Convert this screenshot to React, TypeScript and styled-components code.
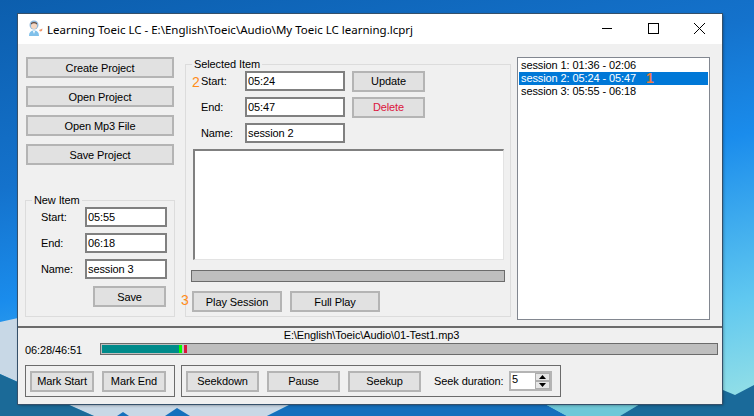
import styled, { createGlobalStyle } from "styled-components";

const GlobalStyle = createGlobalStyle`
  html, body {
    margin: 0;
    padding: 0;
    height: 100%;
    overflow: hidden;
  }
  * {
    box-sizing: border-box;
  }
`;

const sessions = [
  "session 1: 01:36 - 02:06",
  "session 2: 05:24 - 05:47",
  "session 3: 05:55 - 06:18",
];

const App = () => (
  <>
    <GlobalStyle />
    <Desktop>
      <Wallpaper viewBox="0 0 754 416">
        <defs>
          <linearGradient id="sky" gradientUnits="userSpaceOnUse" x1="0" y1="0" x2="122" y2="542">
            <stop offset="0" stopColor="#0c5ead" />
            <stop offset="0.33" stopColor="#1472cc" />
            <stop offset="0.53" stopColor="#1a8cec" />
            <stop offset="0.82" stopColor="#60c8f0" />
            <stop offset="1" stopColor="#95e0e6" />
          </linearGradient>
        </defs>
        <rect width="754" height="416" fill="url(#sky)" />
        <path d="M0 322L18 318H300V404H291L267 416H94L67 404L0 374Z" fill="#c8d8e6" />
        <path d="M0 374L67 404L94 416H0Z" fill="#1b6a98" />
        <path d="M117 416L123 412L129 416ZM165 416L177 408L190 416Z" fill="#1570bd" />
        <path d="M291 404H545L567 416H267Z" fill="#1570bd" />
        <path d="M545 404H640L620 416H567Z" fill="#6fc8d8" />
        <path d="M640 404L723 390L735 395L754 385V416H620Z" fill="#1a6a9a" />
      </Wallpaper>
      <Window>
        <TitleBar>
          <AppIcon viewBox="0 0 18 18">
            <circle cx="8" cy="5" r="4.5" fill="#8fb8dc" />
            <circle cx="8" cy="6" r="3" fill="#f6d6c0" />
            <path d="M5 4.5 Q8 2 11 4.5 L11 3 Q8 1 5 3 Z" fill="#6a4a3a" />
            <path d="M3 16 Q3 10.5 8 10.5 Q13 10.5 13 16 Z" fill="#7fc0ea" />
            <path d="M7 11 L8 14 L9 11 Z" fill="#ffffff" />
            <path d="M13 10 L16.5 8.5 L16 11 L14 11.5 Z" fill="#ef9a70" />
          </AppIcon>
          <WindowTitle>Learning Toeic LC - E:\English\Toeic\Audio\My Toeic LC learning.lcprj</WindowTitle>
          <WindowControls>
            <ControlIcon viewBox="0 0 46 30">
              <path d="M18 14.5H28" stroke="#000" fill="none" />
            </ControlIcon>
            <ControlIcon viewBox="0 0 46 30">
              <rect x="18.5" y="9.5" width="10" height="10" stroke="#000" fill="none" />
            </ControlIcon>
            <ControlIcon viewBox="0 0 46 30">
              <path d="M18 9L29 20M29 9L18 20" stroke="#000" fill="none" />
            </ControlIcon>
          </WindowControls>
        </TitleBar>

        <Content>
          <LeftColumn>
            <ProjectButtons>
              <ProjectButton>Create Project</ProjectButton>
              <ProjectButton>Open Project</ProjectButton>
              <ProjectButton>Open Mp3 File</ProjectButton>
              <ProjectButton>Save Project</ProjectButton>
            </ProjectButtons>
            <NewItemGroup>
              <GroupLegend $offset={-9}>New Item</GroupLegend>
              <FieldRow>
                <NewItemLabel>Start:</NewItemLabel>
                <NewItemInput defaultValue="05:55" />
              </FieldRow>
              <FieldRow>
                <NewItemLabel>End:</NewItemLabel>
                <NewItemInput defaultValue="06:18" />
              </FieldRow>
              <FieldRow>
                <NewItemLabel>Name:</NewItemLabel>
                <NewItemInput defaultValue="session 3" />
              </FieldRow>
              <SaveButton>Save</SaveButton>
            </NewItemGroup>
          </LeftColumn>

          <SelectedGroup>
            <GroupLegend $offset={1}>Selected Item</GroupLegend>
            <SelectedRow>
              <Marker $left={1} $top={3}>2</Marker>
              <SelectedLabel>Start:</SelectedLabel>
              <SelectedInput defaultValue="05:24" />
              <ActionButton>Update</ActionButton>
            </SelectedRow>
            <SelectedRow>
              <SelectedLabel>End:</SelectedLabel>
              <SelectedInput defaultValue="05:47" />
              <ActionButton $danger>Delete</ActionButton>
            </SelectedRow>
            <SelectedRow>
              <SelectedLabel>Name:</SelectedLabel>
              <SelectedInput defaultValue="session 2" />
            </SelectedRow>
            <NotesArea />
            <SessionBar />
            <PlayRow>
              <Marker $left={-11} $top={1}>3</Marker>
              <PlayButton>Play Session</PlayButton>
              <PlayButton>Full Play</PlayButton>
            </PlayRow>
          </SelectedGroup>

          <SessionList>
            {sessions.map((session, index) => (
              <SessionItem key={session} $selected={index === 1}>
                {session}
                {index === 1 && <ListMarker>1</ListMarker>}
              </SessionItem>
            ))}
          </SessionList>
        </Content>

        <PlayerPanel>
          <FileName>E:\English\Toeic\Audio\01-Test1.mp3</FileName>
          <ProgressRow>
            <TimeText>06:28/46:51</TimeText>
            <MainBar>
              <BarFill />
              <BarTick $color="#00ff00" $gap={0} />
              <BarTick $color="#dc143c" $gap={2} />
            </MainBar>
          </ProgressRow>
          <ControlsRow>
            <MarkBox>
              <MarkButton>Mark Start</MarkButton>
              <MarkButton>Mark End</MarkButton>
            </MarkBox>
            <SeekBox>
              <SeekButton>Seekdown</SeekButton>
              <SeekButton>Pause</SeekButton>
              <SeekButton>Seekup</SeekButton>
              <SeekLabel>Seek duration:</SeekLabel>
              <Spinner>
                <SpinnerValue>5</SpinnerValue>
                <SpinnerButtons>
                  <SpinnerButton>
                    <svg width="7" height="4" viewBox="0 0 7 4">
                      <path d="M3.5 0L7 4H0Z" fill="#000" />
                    </svg>
                  </SpinnerButton>
                  <SpinnerButton>
                    <svg width="7" height="4" viewBox="0 0 7 4">
                      <path d="M0 0H7L3.5 4Z" fill="#000" />
                    </svg>
                  </SpinnerButton>
                </SpinnerButtons>
              </Spinner>
            </SeekBox>
          </ControlsRow>
        </PlayerPanel>
      </Window>
    </Desktop>
  </>
);

const uiFont = `"Liberation Sans", Arial, sans-serif`;

const Desktop = styled.div`
  position: relative;
  width: 754px;
  height: 416px;
  padding: 14px 0 0 18px;
  font-family: ${uiFont};
  font-size: 11px;
  letter-spacing: -0.1px;
  color: #000;
`;

const Wallpaper = styled.svg`
  position: absolute;
  inset: 0;
  width: 754px;
  height: 416px;
  display: block;
`;

const Window = styled.div`
  position: relative;
  width: 704px;
  height: 390px;
  background: #f0f0f0;
  display: flex;
  flex-direction: column;
  box-shadow: 0 0 0 1px #35506a, 1px 1px 3px rgba(0, 0, 0, 0.45);
`;

const TitleBar = styled.div`
  height: 30px;
  flex: none;
  background: #fff;
  display: flex;
  align-items: center;
  padding-left: 8px;
`;

const AppIcon = styled.svg`
  width: 18px;
  height: 18px;
  flex: none;
`;

const WindowTitle = styled.div`
  margin-left: 3px;
  font-family: "Noto Sans", "Open Sans", sans-serif;
  font-size: 11.5px;
  letter-spacing: 0;
  white-space: nowrap;
  flex: 1;
`;

const WindowControls = styled.div`
  display: flex;
  flex: none;
  height: 30px;
`;

const ControlIcon = styled.svg`
  width: 46px;
  height: 30px;
  display: block;
`;

const Content = styled.div`
  height: 282px;
  flex: none;
  display: flex;
  align-items: flex-start;
  padding: 13px 0 0 7px;
`;

const LeftColumn = styled.div`
  width: 150px;
  flex: none;
  display: flex;
  flex-direction: column;
`;

const ProjectButtons = styled.div`
  display: flex;
  flex-direction: column;
  gap: 8px;
  padding-left: 1px;
`;

const FlatButton = styled.button`
  display: flex;
  align-items: center;
  justify-content: center;
  height: 21px;
  padding: 0;
  background: #e1e1e1;
  border: 2px solid #b4b4b4;
  border-radius: 0;
  font-family: ${uiFont};
  font-size: 11px;
  letter-spacing: -0.1px;
  color: #000;
  white-space: nowrap;
`;

const ProjectButton = styled(FlatButton)`
  width: 148px;
`;

const GroupBox = styled.fieldset`
  margin: 0;
  min-width: 0;
  border: 1px solid #dcdcdc;
  display: block;
`;

const GroupLegend = styled.legend<{ $offset: number }>`
  margin-left: ${(p) => p.$offset}px;
  padding: 0 2px;
  height: 14px;
  line-height: 14px;
  font-size: 11px;
`;

const NewItemGroup = styled(GroupBox)`
  margin-top: 28px;
  width: 150px;
  height: 124px;
  padding: 0 7px 0 15px;
`;

const FieldRow = styled.div`
  display: flex;
  align-items: center;
  height: 20px;
  margin-bottom: 6px;
`;

const NewItemLabel = styled.span`
  width: 44px;
  flex: none;
`;

const TextInput = styled.input`
  height: 20px;
  padding: 0 1px;
  background: #fff;
  border: 2px solid #808080;
  border-radius: 0;
  outline: none;
  font-family: ${uiFont};
  font-size: 11px;
  letter-spacing: -0.1px;
  color: #000;
`;

const NewItemInput = styled(TextInput)`
  width: 82px;
`;

const SaveButton = styled(FlatButton)`
  width: 73px;
  margin: 7px 0 0 52px;
`;

const SelectedGroup = styled(GroupBox)`
  position: relative;
  margin-left: 10px;
  width: 326px;
  height: 260px;
  padding: 0 6px 0 5px;
  flex: none;
`;

const SelectedRow = styled.div`
  position: relative;
  display: flex;
  align-items: center;
  height: 20px;
  margin-bottom: 6px;
`;

const Marker = styled.span<{ $left: number; $top: number }>`
  position: absolute;
  left: ${(p) => p.$left}px;
  top: ${(p) => p.$top}px;
  font-size: 14px;
  line-height: 16px;
  letter-spacing: 0;
  color: #ff8c1a;
`;

const SelectedLabel = styled.span`
  width: 54px;
  padding-left: 10px;
  flex: none;
`;

const SelectedInput = styled(TextInput)`
  width: 100px;
`;

const ActionButton = styled(FlatButton)<{ $danger?: boolean }>`
  width: 73px;
  margin-left: 7px;
  color: ${(p) => (p.$danger ? "#dc143c" : "#000")};
`;

const NotesArea = styled.div`
  width: 311px;
  height: 111px;
  margin: 5px 0 0 2px;
  background: #fff;
  border-top: 2px solid #808080;
  border-left: 2px solid #808080;
  border-right: 1px solid #e3e3e3;
  border-bottom: 1px solid #e3e3e3;
`;

const SessionBar = styled.div`
  width: 314px;
  height: 12px;
  margin-top: 10px;
  background: #bebebe;
  border: 1px solid #6b6b6b;
`;

const PlayRow = styled.div`
  position: relative;
  display: flex;
  gap: 8px;
  margin: 9px 0 0 1px;
`;

const PlayButton = styled(FlatButton)`
  width: 90px;
`;

const SessionList = styled.div`
  margin-left: 6px;
  width: 193px;
  height: 263px;
  flex: none;
  padding: 1px;
  background: #fff;
  border: 1px solid #828790;
`;

const SessionItem = styled.div<{ $selected?: boolean }>`
  position: relative;
  height: 13px;
  line-height: 13px;
  padding-left: 2px;
  white-space: nowrap;
  background: ${(p) => (p.$selected ? "#0078d7" : "transparent")};
  color: ${(p) => (p.$selected ? "#fff" : "#000")};
`;

const ListMarker = styled.span`
  position: absolute;
  left: 127px;
  top: -1px;
  font-size: 14px;
  font-weight: bold;
  line-height: 15px;
  color: #f47c3c;
`;

const PlayerPanel = styled.div`
  flex: 1;
  padding: 1px 4px 0 7px;
  border-top: 2px solid #6b6b6b;
  display: flex;
  flex-direction: column;
`;

const FileName = styled.div`
  height: 13px;
  line-height: 13px;
  text-align: center;
`;

const ProgressRow = styled.div`
  display: flex;
  align-items: center;
  height: 12px;
  margin-top: 1px;
`;

const TimeText = styled.span`
  width: 75px;
  flex: none;
  white-space: nowrap;
  position: relative;
  top: 1px;
`;

const MainBar = styled.div`
  width: 618px;
  height: 12px;
  flex: none;
  display: flex;
  padding: 1px;
  background: #bebebe;
  border: 1px solid #6b6b6b;
`;

const BarFill = styled.div`
  width: 77px;
  height: 100%;
  background: #008b8b;
`;

const BarTick = styled.div<{ $color: string; $gap: number }>`
  width: 3px;
  height: 100%;
  margin-left: ${(p) => p.$gap}px;
  background: ${(p) => p.$color};
`;

const ControlsRow = styled.div`
  display: flex;
  gap: 6px;
  margin-top: 10px;
`;

const ToolBox = styled.div`
  height: 32px;
  display: flex;
  align-items: center;
  padding-left: 4px;
  border: 1px solid #6b6b6b;
`;

const MarkBox = styled(ToolBox)`
  width: 150px;
  gap: 8px;
`;

const MarkButton = styled(FlatButton)`
  width: 64px;
`;

const SeekBox = styled(ToolBox)`
  width: 380px;
`;

const SeekButton = styled(FlatButton)`
  width: 73px;
  margin-right: 8px;
`;

const SeekLabel = styled.span`
  width: 75px;
  margin-left: 5px;
  flex: none;
  white-space: nowrap;
`;

const Spinner = styled.div`
  width: 43px;
  height: 20px;
  display: flex;
  background: #fff;
  border: 2px solid #b4b4b4;
`;

const SpinnerValue = styled.div`
  flex: 1;
  padding-left: 1px;
  line-height: 13px;
`;

const SpinnerButtons = styled.div`
  width: 15px;
  display: flex;
  flex-direction: column;
`;

const SpinnerButton = styled.div`
  flex: 1;
  display: flex;
  align-items: center;
  justify-content: center;
  background: #e6e6e6;
  border: 1px solid #adadad;
`;

export default App;
